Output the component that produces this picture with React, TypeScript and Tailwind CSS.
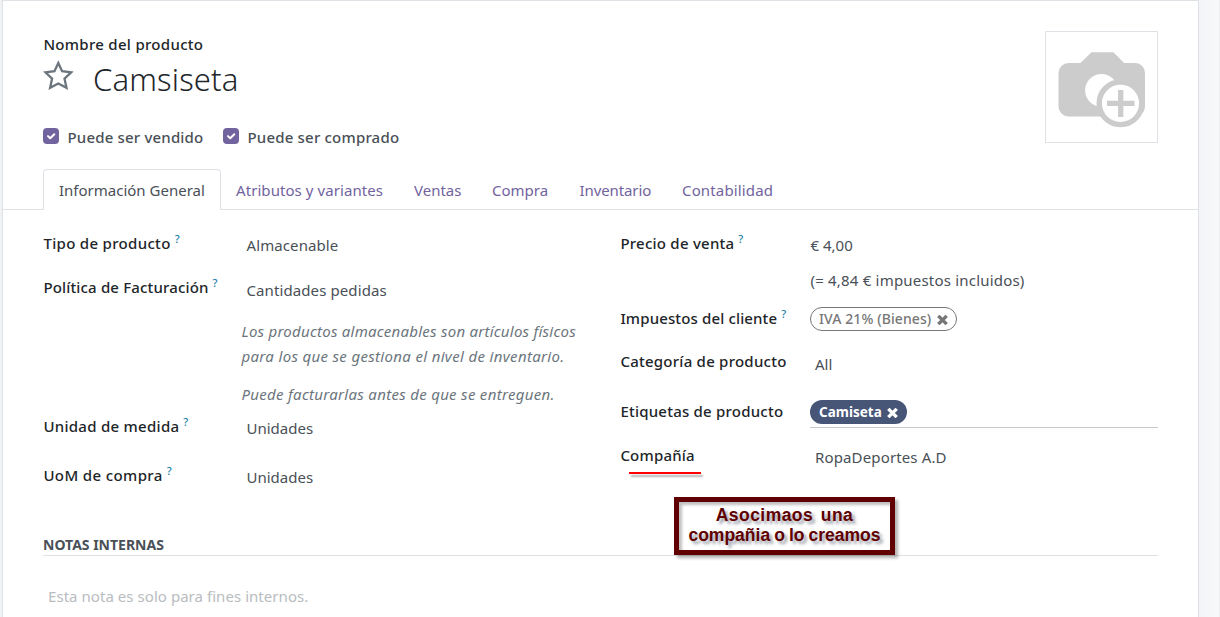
import type { ReactNode } from "react";

type FieldProps = { label: string; help?: boolean; spacing?: string; height: string; children?: ReactNode };

function FieldLabel({ label, help, spacing = "", height }: FieldProps) {
  return (
    <div className={`pl-[0.4px] ${height}`}>
      <div className={`whitespace-nowrap font-medium text-[#212529] ${spacing}`}>
        {label}
        {help && <sup className="relative top-[-6px] ml-1 align-baseline text-[11px] font-medium leading-none tracking-normal text-[#1a80a8]">?</sup>}
      </div>
    </div>
  );
}

function LeftField(props: FieldProps) {
  return (
    <div className="grid grid-cols-[198px_1fr]">
      <FieldLabel {...props} />
      <div className="whitespace-nowrap pl-[5.500px]">{props.children}</div>
    </div>
  );
}

function RightField(props: FieldProps) {
  return (
    <div className="grid grid-cols-[190px_1fr]">
      <FieldLabel {...props} />
      <div className="whitespace-nowrap">{props.children}</div>
    </div>
  );
}

function Cross() {
  return (
    <svg className="h-[10px] w-[11px]" viewBox="0 0 11 10" fill="none" stroke="currentColor" strokeWidth="3.4">
      <path d="M1.3 0.9 9.7 9.1M9.7 0.9 1.3 9.1" />
    </svg>
  );
}

function Check({ label, spacing }: { label: string; spacing: string }) {
  return (
    <label className="flex items-start">
      <span className="mt-[3px] flex h-4 w-4 items-center justify-center rounded-[4px] bg-[#71639e]">
        <svg className="h-4 w-4" viewBox="0 0 16 16" fill="none" stroke="white" strokeWidth="2" strokeLinecap="round" strokeLinejoin="round">
          <path d="M5 8.100 7.200 10.200 11.300 6.200" />
        </svg>
      </span>
      <span className={`ml-[8.500px] whitespace-nowrap font-medium text-[#495057] ${spacing}`}>{label}</span>
    </label>
  );
}

export default function App() {
  return (
    <div className="flex h-[617px] w-full overflow-hidden bg-[#f8f9fa] font-['Noto_Sans',sans-serif] text-[15px] leading-6 text-[#495057]">
      <div className="w-[2px] shrink-0 bg-[#f1f2f4]" />
      <main className="relative flex w-[1197px] shrink-0 flex-col border-x border-t border-[#dee2e6] bg-white">
        <header className="flex h-[168px] items-start justify-between pl-10 pr-10">
          <div className="pt-[31px]">
            <div className="pl-[0.4px] font-medium tracking-[0.3px] text-[#212529]">Nombre del producto</div>
            <div className="flex h-[69px] items-start">
              <svg className="mt-[4px] h-[31px] w-[31px]" viewBox="0 0 31 31" fill="none" stroke="#6c757d" strokeWidth="2.300">
                <path d="M15.300 2.900 19.100 11.200 28.200 12.300 21.500 18.600 23.500 27.800 15.300 23.600 7.100 27.800 9.100 18.600 2.400 12.300 11.500 11.200Z" />
              </svg>
              <h1 className="ml-[19px] mt-[2px] text-[31px] font-[350] leading-[42px] tracking-[0.15px] text-[#212529]">Camsiseta</h1>
            </div>
            <div className="flex gap-[19.500px]">
              <Check label="Puede ser vendido" spacing="tracking-[0.18px]" />
              <Check label="Puede ser comprado" spacing="tracking-[0.2px]" />
            </div>
          </div>
          <div className="mt-[30px] h-[112px] w-[113px] border border-[#dee2e6]">
            <svg className="h-[110px] w-[111px]" viewBox="1046 32 111 110">
              <path fill="#ccc" d="M1068.500 63h12l11-10.700h22l10.500 10.700h11.500a10 10 0 0 1 9.500 10v34a10 10 0 0 1-10 9.500h-66.500a10 10 0 0 1-10-10v-33.500a10 10 0 0 1 10-10z" />
              <circle cx="1101.500" cy="90.300" r="16.400" fill="white" />
              <circle cx="1120.500" cy="103.300" r="21.300" fill="white" stroke="#ccc" strokeWidth="5.400" />
              <path d="M1107 103.300h27.500M1120.700 90v27" stroke="#ccc" strokeWidth="5.300" />
            </svg>
          </div>
        </header>

        <nav className="flex h-[41px] shrink-0 items-stretch whitespace-nowrap text-[#71639e]">
          <span className="w-10 border-b border-[#dee2e6]" />
          <span className="w-[178px] rounded-t-[4px] border-x border-t border-[#dee2e6] pl-[15px] pt-[8px] text-[#495057]">Información General</span>
          <div className="flex flex-1 border-b border-[#dee2e6] pt-[9px]">
            <span className="w-[178px] pl-[15px] tracking-[0.07px]">Atributos y variantes</span>
            <span className="w-[78px] pl-[15px]">Ventas</span>
            <span className="w-[88px] pl-[15px]">Compra</span>
            <span className="w-[102px] pl-[14.500px] tracking-[-0.1px]">Inventario</span>
            <span className="pl-[15px] tracking-[0.15px]">Contabilidad</span>
          </div>
        </nav>

        <div className="flex h-[288px] shrink-0 pl-10 pr-10 pt-[21px]">
          <section className="w-[577px]">
            <LeftField label="Tipo de producto" help spacing="tracking-[0.32px]" height="h-[44px]">
              <div className="pt-[2px] tracking-[0.1px]">Almacenable</div>
            </LeftField>
            <LeftField label="Política de Facturación" help spacing="tracking-[0.16px]" height="h-[139px]">
              <div className="pt-[3px] tracking-[0.1px]">Cantidades pedidas</div>
              <div className="-ml-[5px] mt-[17px] italic leading-[25px] text-[#6c757d]">
                <div className="tracking-[0.25px]">Los productos almacenables son artículos físicos</div>
                <div className="tracking-[0.33px]">para los que se gestiona el nivel de inventario.</div>
              </div>
              <div className="-ml-[5px] mt-[13px] italic leading-[25px] tracking-[0.3px] text-[#6c757d]">Puede facturarlas antes de que se entreguen.</div>
            </LeftField>
            <LeftField label="Unidad de medida" help spacing="tracking-[0.28px]" height="h-[49px]">
              <div className="pt-[2px]">Unidades</div>
            </LeftField>
            <LeftField label="UoM de compra" help spacing="tracking-[0.38px]" height="h-[40px]">
              <div className="pt-[2px]">Unidades</div>
            </LeftField>
          </section>

          <section className="flex-1">
            <RightField label="Precio de venta" help spacing="tracking-[0.24px]" height="h-[75px]">
              <div className="pl-[0.500px] pt-[2px]">€ 4,00</div>
              <div className="pl-[0.500px] pt-[11px] tracking-[0.2px]">(= 4,84 € impuestos incluidos)</div>
            </RightField>
            <RightField label="Impuestos del cliente" help spacing="tracking-[0.14px]" height="h-[43px]">
              <span className="mt-[1px] flex h-6 w-[147px] items-center rounded-full border border-[#777] pl-2 text-[14px] font-medium tracking-[0.1px] text-[#777]">
                IVA 21% (Bienes)
                <span className="ml-[6px] mt-[1px]"><Cross /></span>
              </span>
            </RightField>
            <RightField label="Categoría de producto" spacing="tracking-[0.24px]" height="h-[50px]">
              <div className="pl-[5px] pt-[3px]">All</div>
            </RightField>
            <RightField label="Etiquetas de producto" spacing="tracking-[0.22px]" height="h-[44px]">
              <div className="mt-[1px] h-7 border-b border-[#c6c9cc]">
                <span className="flex h-6 w-[97px] items-center rounded-full bg-[#475577] pl-[9px] text-[13.500px] font-bold text-white">
                  Camiseta
                  <span className="ml-[5px] mt-[1px]"><Cross /></span>
                </span>
              </div>
            </RightField>
            <RightField label="Compañía" spacing="tracking-[0.2px]" height="h-[40px]">
              <div className="pl-[5px] pt-[2px] tracking-[0.14px]">RopaDeportes A.D</div>
            </RightField>
          </section>
        </div>

        <section className="mx-10 pt-[35px]">
          <h2 className="h-[23px] border-b border-[#dee2e6] text-[14px] font-bold">NOTAS INTERNAS</h2>
          <p className="pl-[5px] pt-[28px] tracking-[0.05px] text-[#b8bcc0]">Esta nota es solo para fines internos.</p>
        </section>

        <div className="absolute left-[626px] top-[471px] h-[2px] w-[72px] bg-[#f00] shadow-[2px_3px_2px_rgba(0,0,0,0.3)]" />
        <div className="absolute left-[671px] top-[496px] h-[58px] w-[221px] border-[5px] border-[#600000] pt-[3px] text-center font-['Liberation_Sans',sans-serif] text-[17.500px] font-bold leading-5 text-[#600000] shadow-[3px_3px_3px_rgba(0,0,0,0.3),inset_3px_3px_3px_rgba(0,0,0,0.25)] [text-shadow:3px_3px_3px_rgba(60,70,90,0.5)]">
          <div className="whitespace-pre tracking-[0.45px] [word-spacing:-1.500px]">Asocimaos  una</div>
          <div className="whitespace-nowrap tracking-[0px] [word-spacing:-0.800px]">compañia o lo creamos</div>
        </div>
      </main>
      <div className="flex-1 border-r border-[#eceef0] bg-gradient-to-r from-[#f3f4f7] to-[#f8f9fa]" />
    </div>
  );
}
